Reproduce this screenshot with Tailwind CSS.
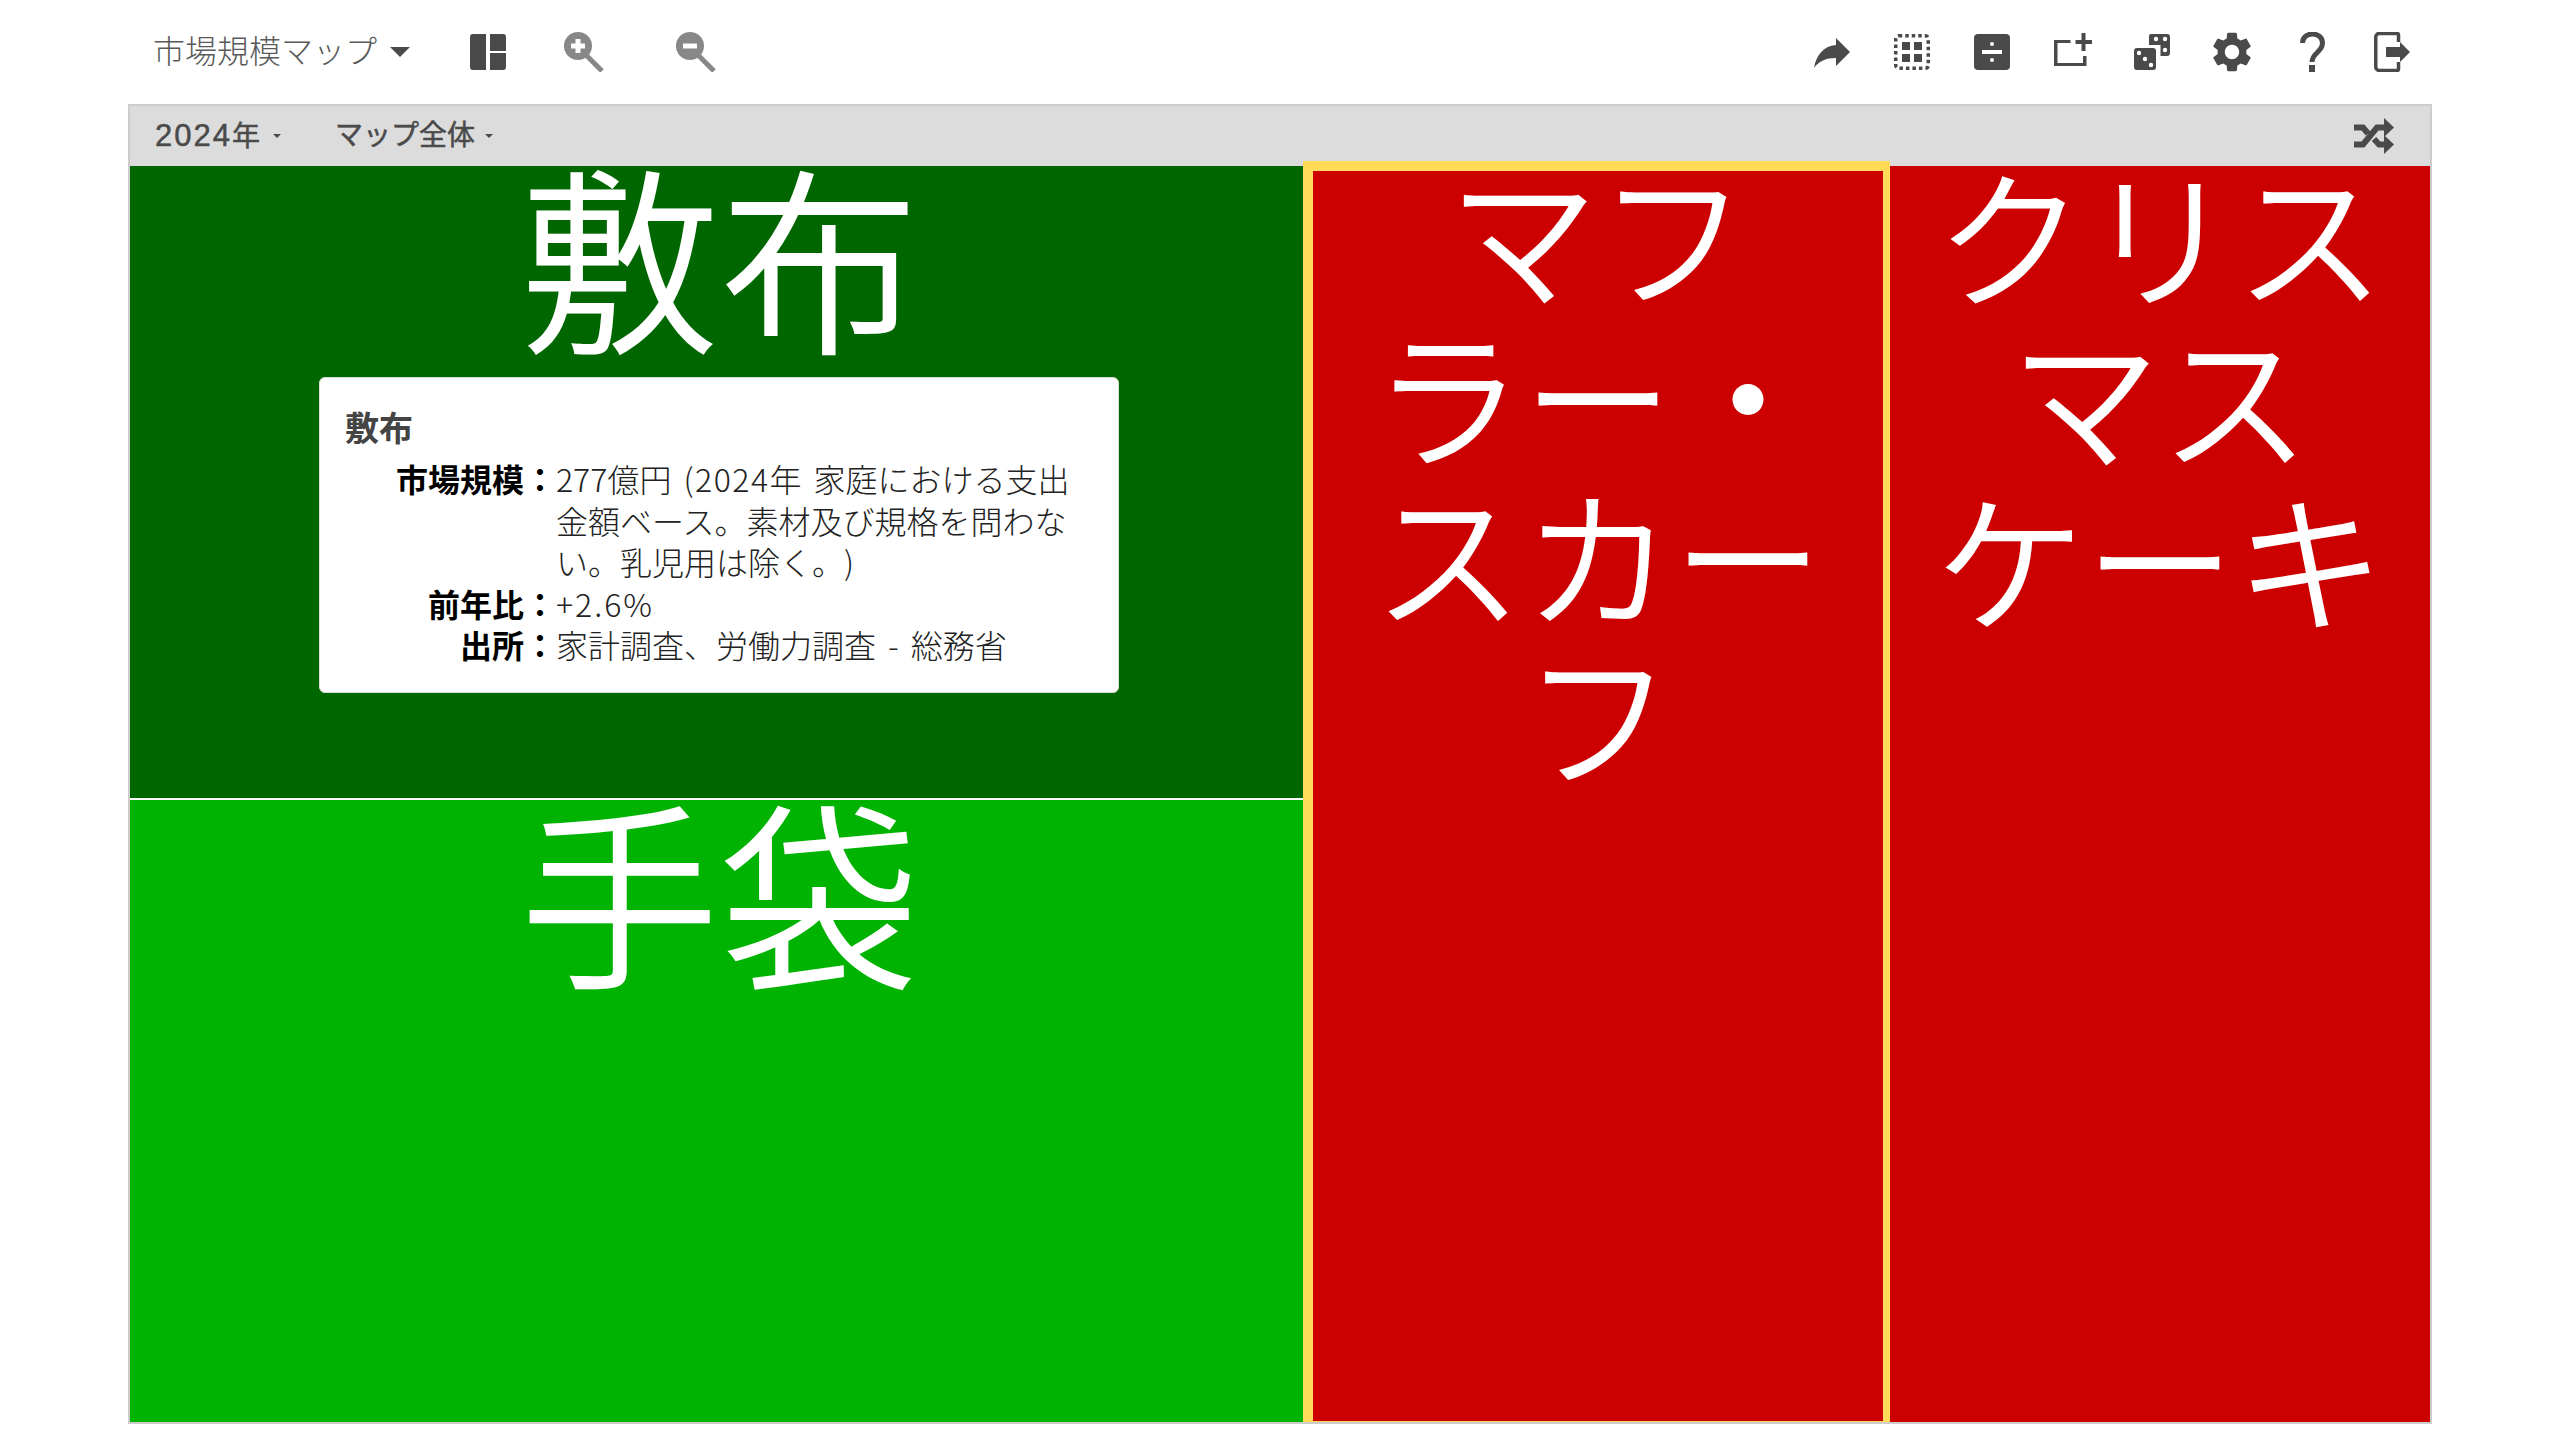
<!doctype html>
<html lang="ja">
<head>
<meta charset="utf-8">
<title>市場規模マップ</title>
<script src="https://cdn.jsdelivr.net/npm/@tailwindcss/browser@4"></script>
</head>
<body class="bg-white font-['Liberation_Sans','Noto_Sans_CJK_JP',sans-serif]">
<div class="w-[2560px] h-[1440px] px-[128px] flex flex-col">

  <!-- toolbar -->
  <div class="h-[104px] flex items-center pl-[25px] pr-[22px] text-[#4a4a4a]">
    <span class="text-[32px] font-light text-[#5a5a5a]">市場規模マップ</span>
    <span class="ml-[13px] w-0 h-0 border-x-[10px] border-x-transparent border-t-[10px] border-t-[#4a4a4a]"></span>
    <svg class="ml-[60px]" width="36" height="36" viewBox="0 0 36 36" fill="#4a4a4a"><path d="M3 0h13v36H3a3 3 0 0 1-3-3V3a3 3 0 0 1 3-3zM20 0h13a3 3 0 0 1 3 3v14H20zM20 19h16v14a3 3 0 0 1-3 3H20z"/></svg>
    <svg class="ml-[58px]" width="40" height="40" viewBox="0 0 40 40"><circle cx="14" cy="14" r="14" fill="#888"/><path d="M22 23l16 16" stroke="#888" stroke-width="5"/><path d="M14 7v14M7 14h14" stroke="#fff" stroke-width="5"/></svg>
    <svg class="ml-[72px]" width="40" height="40" viewBox="0 0 40 40"><circle cx="14" cy="14" r="14" fill="#888"/><path d="M22 23l16 16" stroke="#888" stroke-width="5"/><path d="M7 14h14" stroke="#fff" stroke-width="5"/></svg>

    <div class="ml-auto flex items-center">
      <svg width="36" height="36" viewBox="0 0 36 36" fill="#4a4a4a"><path d="M22 4l14 14-14 14V24C12 24 5 27 0 34 2 22 9 12 22 11z"/></svg>
      <svg class="ml-[44px]" width="36" height="36" viewBox="0 0 36 36"><rect x="1.750" y="1.750" width="32.500" height="32.500" rx="3" fill="none" stroke="#4a4a4a" stroke-width="3.500" stroke-dasharray="3.500 3"/><path d="M8 8h8v8H8zM20 8h8v8h-8zM8 20h8v8H8zM20 20h8v8h-8z" fill="#4a4a4a"/></svg>
      <svg class="ml-[44px]" width="36" height="36" viewBox="0 0 36 36"><rect width="36" height="36" rx="4" fill="#4a4a4a"/><path d="M8 16h20v4H8z" fill="#fff"/><circle cx="18" cy="10" r="2" fill="#fff"/><circle cx="18" cy="26" r="2" fill="#fff"/></svg>
      <svg class="ml-[44px]" width="38" height="38" viewBox="0 0 38 38" fill="#4a4a4a"><path d="M0 7h16.500v3H3.500v20h25.500V23h3.500v10H0z"/><path d="M27.500 0h4v7h6.500v4h-6.500v7h-4v-7h-6v-4h6z"/></svg>
      <svg class="ml-[42px]" width="36" height="36" viewBox="0 0 36 36" fill="#4a4a4a"><path d="M17 0h16a3 3 0 0 1 3 3v16a3 3 0 0 1-3 3h-6.500V11H15V2a2 2 0 0 1 2-2z"/><rect y="14" width="22" height="22" rx="3"/><g fill="#fff"><circle cx="22" cy="5" r="2.200"/><circle cx="31" cy="5" r="2.200"/><circle cx="31" cy="16" r="2.200"/><circle cx="5" cy="19" r="2.200"/><circle cx="11" cy="25" r="2.200"/><circle cx="17" cy="31" r="2.200"/></g></svg>
      <svg class="ml-[42px]" width="40" height="40" viewBox="2.400 2 19.200 20" fill="#4a4a4a"><path d="M19.140 12.940c.04-.3.06-.61.06-.94 0-.32-.02-.64-.07-.94l2.030-1.580c.18-.14.23-.41.12-.61l-1.920-3.320c-.12-.22-.37-.29-.59-.22l-2.390.96c-.5-.38-1.030-.7-1.620-.94l-.36-2.540c-.04-.24-.24-.41-.48-.41h-3.840c-.24 0-.43.17-.47.41l-.36 2.540c-.59.24-1.130.57-1.620.94l-2.390-.96c-.22-.08-.47 0-.59.22L2.740 8.870c-.12.21-.08.47.12.61l2.030 1.580c-.05.3-.09.63-.09.94s.02.64.07.94l-2.030 1.580c-.18.14-.23.41-.12.61l1.920 3.320c.12.22.37.29.59.22l2.390-.96c.5.38 1.030.7 1.620.94l.36 2.540c.05.24.24.41.48.41h3.840c.24 0 .44-.17.47-.41l.36-2.540c.59-.24 1.130-.56 1.620-.94l2.390.96c.22.08.47 0 .59-.22l1.920-3.320c.12-.22.07-.47-.12-.61l-2.010-1.580zM12 15.600c-1.980 0-3.600-1.620-3.600-3.600s1.620-3.600 3.600-3.600 3.600 1.620 3.600 3.600-1.620 3.600-3.600 3.600z"/></svg>
      <svg class="ml-[48px]" width="25" height="40" viewBox="0 0 25 40" fill="none"><path d="M2.500 11C2.500-1 22.500-1 22.500 11 22.500 20 12 21 12 30" stroke="#4a4a4a" stroke-width="5"/><path d="M9 33h6v7H9z" fill="#4a4a4a"/></svg>
      <svg class="ml-[49px]" width="36" height="40" viewBox="0 0 36 40" fill="none"><path d="M24.500 10V3a1.500 1.500 0 0 0-1.500-1.500H5A3.500 3.500 0 0 0 1.750 5v30A3.500 3.500 0 0 0 5 38.500h18a1.500 1.500 0 0 0 1.500-1.500v-7" stroke="#4a4a4a" stroke-width="3.500"/><path d="M12 15h14V10l10 10-10 10v-5H12z" fill="#4a4a4a"/></svg>
    </div>
  </div>

  <!-- map frame -->
  <div class="flex-1 mb-[16px] border-2 border-[#ccc] flex flex-col">
    <div class="h-[60px] bg-[#dcdcdc] flex items-center pl-[25px] pr-[36px] text-[#4a4a4a] [-webkit-text-stroke:0.5px_#4a4a4a]">
      <span class="text-[31px] tracking-[2px]">2024<span class="text-[28px] tracking-normal">年</span></span>
      <span class="ml-[13px] w-0 h-0 border-x-[4px] border-x-transparent border-t-[4px] border-t-[#4a4a4a]"></span>
      <span class="ml-[54px] text-[28px]">マップ全体</span>
      <span class="ml-[10px] w-0 h-0 border-x-[4px] border-x-transparent border-t-[4px] border-t-[#4a4a4a]"></span>
      <svg class="ml-auto" width="40" height="36" viewBox="0 0 40 36"><path d="M0 26.500h9L23 9.500h8M0 9.500h9l5 6M20 21l5 5.500h6" fill="none" stroke="#4a4a4a" stroke-width="6"/><path d="M30 0l10 9.500-10 9.500zM30 17l10 9.500-10 9.500z" fill="#4a4a4a"/></svg>
    </div>
    <div class="flex-1 flex font-['Noto_Sans_CJK_JP',sans-serif] font-[350]">
      <div class="w-[1173px] flex flex-col">
        <div class="relative h-[634px] bg-[#006600] border-b-2 border-b-white flex justify-center pl-[6px] text-white text-[200px] leading-[200px]">
          <span class="-mt-[14px] h-[200px]">敷布</span>
          <!-- tooltip -->
          <div class="absolute left-[189px] top-[211px] w-[800px] h-[316px] bg-white rounded-[6px] border border-[#ddd] px-[25px] pt-[28px] text-[#333] font-normal [text-spacing-trim:space-all] [word-spacing:5px]">
            <div class="text-[34px] leading-[42px] font-bold text-[#444]">敷布</div>
            <div class="mt-[10px] grid grid-cols-[211px_1fr] text-[32px] leading-[41.500px] text-[#222]">
              <div class="font-bold text-right text-black">市場規模：</div><div class="w-[520px] font-light"><span>277</span>億円 <span class="tracking-[1.500px]">(2024</span>年 家庭における支出金額ベース。素材及び規格を問わない。乳児用は除く。)</div>
              <div class="font-bold text-right text-black">前年比：</div><div class="font-light tracking-[2px]">+2.6%</div>
              <div class="font-bold text-right text-black">出所：</div><div class="font-light">家計調査、労働力調査 - 総務省</div>
            </div>
          </div>
        </div>
        <div class="flex-1 bg-[#00b300] flex justify-center pl-[6px] text-white text-[200px] leading-[200px]">
          <span class="-mt-[13px] h-[200px]">手袋</span>
        </div>
      </div>
      <div class="w-[587px] -mt-[5px] bg-[#cc0000] border-solid border-t-[10px] border-l-[10px] border-r-[7px] border-b-[1px] border-[#ffdb58] text-white text-[150px] leading-[160px] text-center">
        <div class="-mt-[19px]">マフ<br>ラー・<br>スカー<br>フ</div>
      </div>
      <div class="w-[540px] bg-[#cc0000] text-white text-[150px] leading-[162px] text-center">
        <div class="-mt-[15px]">クリス<br>マス<br>ケーキ</div>
      </div>
    </div>
  </div>
</div>
</body>
</html>
